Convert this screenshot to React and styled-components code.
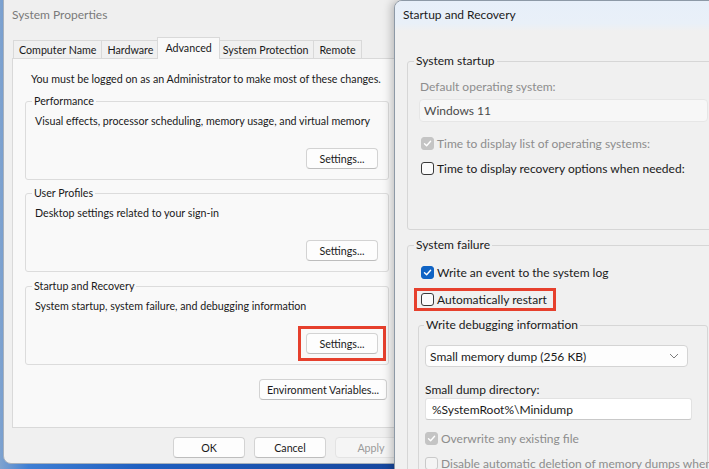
import React from 'react';
import styled, { createGlobalStyle } from 'styled-components';

const Global = createGlobalStyle`
  html, body { margin: 0; padding: 0; }
  body { width: 709px; height: 469px; overflow: hidden; background: #1f58b0; }
  * { box-sizing: border-box; }
`;

const Desktop = styled.div`
  position: relative;
  width: 709px;
  height: 469px;
  overflow: hidden;
  background: linear-gradient(90deg, #7fa3cf 0%, #3f7fd4 4%, #1f5fc0 20%, #16449a 60%, #123a86 100%);
  font-family: Lato, "Liberation Sans", sans-serif;
  color: #1a1a1a;
`;

const Window = styled.div`
  position: absolute;
  display: flex;
  flex-direction: column;
  background: #f0f0f0;
  border: 1px solid #a8b1bc;
`;

const LeftWindow = styled(Window)`
  left: 3px;
  top: -1px;
  width: 414px;
  height: 465px;
  border-radius: 0 0 8px 8px;
`;

const RightWindow = styled(Window)`
  left: 394px;
  top: 0;
  width: 340px;
  height: 490px;
  border-color: #8d99a6;
  border-radius: 8px 0 0 0;
  box-shadow: -3px 0 9px rgba(0, 0, 0, 0.22);
  overflow: hidden;
`;

const TitleBar = styled.div`
  height: 30px;
  flex: none;
  display: flex;
  align-items: center;
  padding: 0 0 ${p => (p.$active ? 3 : 1)}px 8px;
  font-size: 12px;
  color: ${p => (p.$active ? '#1b1b1b' : '#7a7a7a')};
  background: ${p =>
    p.$active
      ? 'linear-gradient(180deg, #e7eff9 0%, #e9f0f8 75%, #f0f0f0 100%)'
      : '#efefef'};
`;

const LeftBody = styled.div`
  display: flex;
  flex-direction: column;
  padding: 0 8px 0 8px;
  font-size: 10.7px;
`;

const TabStrip = styled.div`
  display: flex;
  align-items: flex-end;
  height: 28px;
  padding-left: 1px;
`;

const Tab = styled.div`
  position: relative;
  height: ${p => (p.$selected ? 22 : 18)}px;
  line-height: ${p => (p.$selected ? 20 : 18)}px;
  margin: ${p => (p.$selected ? '0 -2px -1px -2px' : '0 0 0 -1px')};
  padding: 0 ${p => (p.$selected ? 7 : 5)}px;
  z-index: ${p => (p.$selected ? 2 : 1)};
  background: ${p => (p.$selected ? '#f9f9f9' : '#f0f0f0')};
  border: 1px solid #d9d9d9;
  border-bottom: none;
  white-space: nowrap;
  &:first-child { margin-left: 0; }
`;

const TabPanel = styled.div`
  display: flex;
  flex-direction: column;
  width: 389px;
  height: 370px;
  padding: 12px 11px 0 12px;
  background: #f9f9f9;
  border: 1px solid #d9d9d9;
`;

const Notice = styled.div`
  line-height: 16px;
  padding-left: 6px;
  white-space: nowrap;
`;

const Group = styled.fieldset`
  margin: ${p => p.$top || 0}px 0 0 0;
  padding: ${p => p.$pad};
  border: 1px solid ${p => p.$line || '#dcdcdc'};
  border-radius: 3px;
  display: flex;
  flex-direction: column;
  min-width: 0;
`;

const Legend = styled.legend`
  padding: 0 2px;
  margin-left: ${p => p.$shift}px;
  line-height: ${p => p.$lh || 16}px;
  white-space: nowrap;
`;

const Desc = styled.div`
  line-height: 16px;
  white-space: nowrap;
`;

const ButtonRow = styled.div`
  display: flex;
  justify-content: flex-end;
  gap: ${p => p.$gap || 0}px;
  margin-top: ${p => p.$top || 0}px;
  padding-right: ${p => p.$right || 0}px;
`;

const Button = styled.button`
  height: 21px;
  min-width: 72px;
  padding: 0 7px;
  font-family: inherit;
  font-size: 10.7px;
  color: ${p => (p.disabled ? '#9a9a9a' : '#1a1a1a')};
  background: ${p => (p.disabled ? '#f5f5f5' : '#fdfdfd')};
  border: 1px solid ${p => (p.disabled ? '#e3e3e3' : '#d3d3d3')};
  border-bottom-color: ${p => (p.disabled ? '#e3e3e3' : '#bdbdbd')};
  border-radius: 4px;
  white-space: nowrap;
`;

const Highlight = styled.div`
  display: flex;
  align-self: flex-end;
  border: 3px solid #e6402d;
  margin: -7px -8px -7px -8px;
  padding: 4px 5px;
`;

const RowHighlight = styled.div`
  display: flex;
  align-self: flex-start;
  border: 3px solid #e6402d;
  margin: 6px 0 0 -4px;
  padding: 0 6px 0 4px;
`;

const Footer = styled(ButtonRow)``;

const RightBody = styled.div`
  display: flex;
  flex-direction: column;
  padding: 0 12px 0 12px;
  font-size: 12px;
`;

const FieldLabel = styled.div`
  line-height: ${p => p.$lh || 18}px;
  margin-top: ${p => p.$top || 0}px;
  color: ${p => (p.$disabled ? '#8d8d8d' : '#1a1a1a')};
  white-space: nowrap;
`;

const Combo = styled.div`
  display: flex;
  align-items: center;
  justify-content: space-between;
  height: ${p => p.$h || 22}px;
  width: ${p => (p.$w ? `${p.$w}px` : 'auto')};
  margin: ${p => p.$top || 0}px 0 0 ${p => p.$left || 0}px;
  padding: 0 8px 0 ${p => p.$padLeft || 4}px;
  background: ${p => (p.$disabled ? '#f7f7f7' : '#fdfdfd')};
  border: 1px solid ${p => (p.$disabled ? '#e6e6e6' : '#d4d4d4')};
  border-radius: 4px;
  color: ${p => (p.$disabled ? '#4a4a4a' : '#1a1a1a')};
  white-space: nowrap;
`;

const TextInput = styled.div`
  display: flex;
  align-items: center;
  height: 22px;
  width: 267px;
  padding-left: 6px;
  background: #ffffff;
  border: 1px solid #e2e2e2;
  border-bottom-color: #c9c9c9;
  border-radius: 3px;
  white-space: nowrap;
`;

const CheckRow = styled.div`
  display: flex;
  align-items: center;
  gap: 3px;
  height: ${p => p.$h || 20}px;
  margin: ${p => p.$top || 0}px 0 0 ${p => p.$left || 0}px;
  color: ${p => (p.$disabled ? '#8d8d8d' : '#1a1a1a')};
  white-space: nowrap;
`;

const Box = styled.span`
  flex: none;
  display: flex;
  align-items: center;
  justify-content: center;
  width: 13px;
  height: 13px;
  border-radius: 3px;
  background: ${p =>
    p.$checked ? (p.$disabled ? '#c4c4c4' : '#0f63c4') : p.$disabled ? '#f4f4f4' : '#fbfbfb'};
  border: 1px solid
    ${p =>
      p.$checked ? (p.$disabled ? '#c4c4c4' : '#0f63c4') : p.$disabled ? '#c9c9c9' : '#3a3a3a'};
`;

const Check = ({ checked, disabled, children, ...rest }) => (
  <CheckRow $disabled={disabled} {...rest}>
    <Box $checked={checked} $disabled={disabled}>
      {checked && (
        <svg width="9" height="9" viewBox="0 0 9 9">
          <path d="M1.5 4.8 L3.6 6.8 L7.6 2.2" fill="none" stroke="#fff" strokeWidth="1.4" strokeLinecap="round" strokeLinejoin="round" />
        </svg>
      )}
    </Box>
    <span>{children}</span>
  </CheckRow>
);

const Chevron = () => (
  <svg width="10" height="6" viewBox="0 0 10 6">
    <path d="M1 1 L5 5 L9 1" fill="none" stroke="#7c7c7c" strokeWidth="1" />
  </svg>
);

export default function App() {
  return (
    <>
      <Global />
      <Desktop>
        <LeftWindow>
          <TitleBar>System Properties</TitleBar>
          <LeftBody>
            <TabStrip>
              <Tab>Computer Name</Tab>
              <Tab>Hardware</Tab>
              <Tab $selected>Advanced</Tab>
              <Tab>System Protection</Tab>
              <Tab>Remote</Tab>
            </TabStrip>
            <TabPanel>
              <Notice>You must be logged on as an Administrator to make most of these changes.</Notice>
              <Group $top={6} $pad="4px 10px 10px 9px">
                <Legend $shift={-3}>Performance</Legend>
                <Desc>Visual effects, processor scheduling, memory usage, and virtual memory</Desc>
                <ButtonRow $top={19}>
                  <Button>Settings...</Button>
                </ButtonRow>
              </Group>
              <Group $top={5} $pad="4px 10px 10px 9px">
                <Legend $shift={-3}>User Profiles</Legend>
                <Desc>Desktop settings related to your sign-in</Desc>
                <ButtonRow $top={19}>
                  <Button>Settings...</Button>
                </ButtonRow>
              </Group>
              <Group $top={6} $pad="4px 10px 10px 9px">
                <Legend $shift={-3}>Startup and Recovery</Legend>
                <Desc>System startup, system failure, and debugging information</Desc>
                <ButtonRow $top={19}>
                  <Highlight>
                    <Button>Settings...</Button>
                  </Highlight>
                </ButtonRow>
              </Group>
              <ButtonRow $top={14} $right={2}>
                <Button>Environment Variables...</Button>
              </ButtonRow>
            </TabPanel>
            <Footer $top={9} $gap={9} $right={1}>
              <Button>OK</Button>
              <Button>Cancel</Button>
              <Button disabled>Apply</Button>
            </Footer>
          </LeftBody>
        </LeftWindow>

        <RightWindow>
          <TitleBar $active>Startup and Recovery</TitleBar>
          <RightBody>
            <Group $top={21} $pad="8px 12px 51px 12px" $line="#d6d6d6">
              <Legend $shift={-6} $lh={18}>System startup</Legend>
              <FieldLabel $disabled>Default operating system:</FieldLabel>
              <Combo $disabled $h={23} $top={3} $left={-1}>Windows 11</Combo>
              <Check checked disabled $top={11} $left={1}>Time to display list of operating systems:</Check>
              <Check $top={5} $left={1}>Time to display recovery options when needed:</Check>
            </Group>
            <Group $top={6} $pad="8px 12px 0 10px" $line="#d6d6d6">
              <Legend $shift={-4} $lh={18}>System failure</Legend>
              <Check checked $left={3}>Write an event to the system log</Check>
              <RowHighlight>
                <Check $h={17}>Automatically restart</Check>
              </RowHighlight>
              <Group $top={5} $pad="11px 12px 40px 6px" $line="#d6d6d6">
                <Legend $shift={-1} $lh={18}>Write debugging information</Legend>
                <Combo $w={263} $padLeft={4}>
                  <span>Small memory dump (256 KB)</span>
                  <Chevron />
                </Combo>
                <FieldLabel $lh={16} $top={15}>Small dump directory:</FieldLabel>
                <TextInput>%SystemRoot%\Minidump</TextInput>
                <Check checked disabled $top={8}>Overwrite any existing file</Check>
                <Check disabled $top={5}>Disable automatic deletion of memory dumps when disk space is low</Check>
              </Group>
            </Group>
          </RightBody>
        </RightWindow>
      </Desktop>
    </>
  );
}
